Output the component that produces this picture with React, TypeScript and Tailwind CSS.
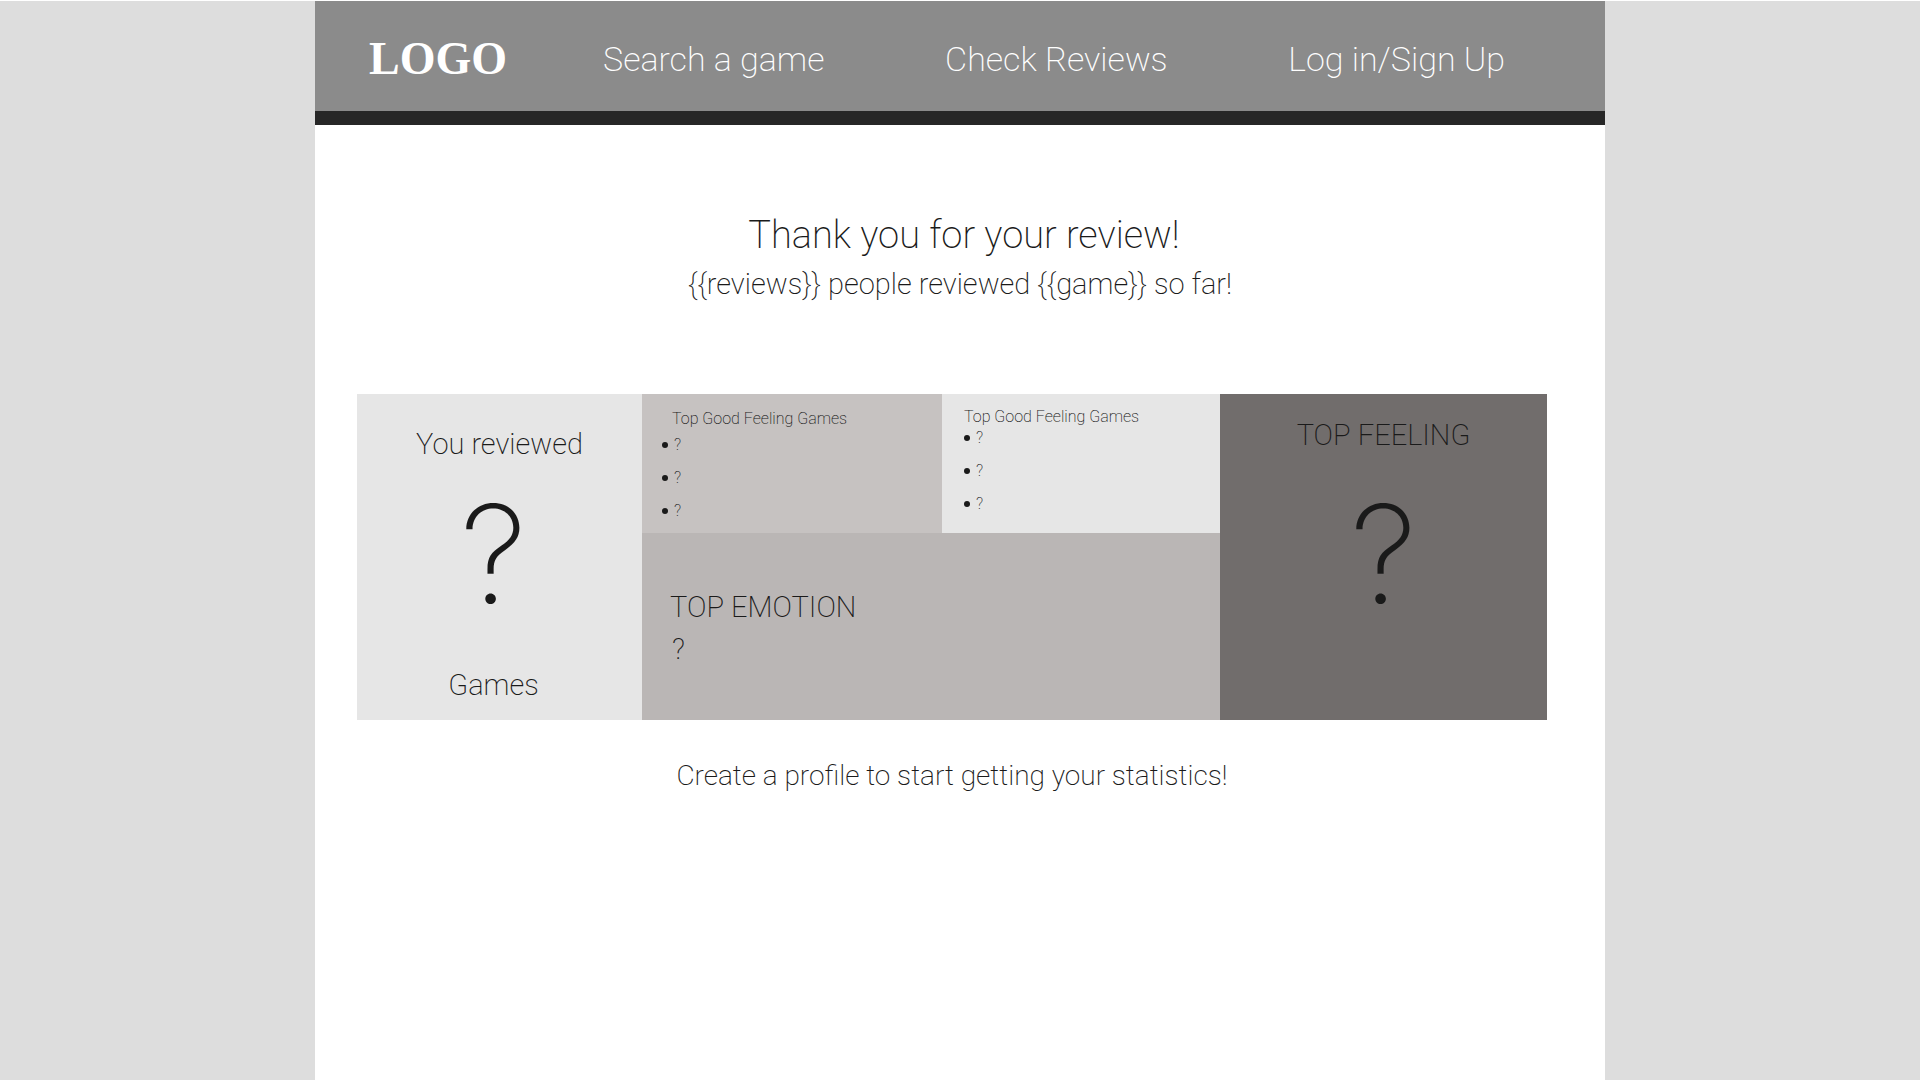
const navLinks = ["Search a game", "Check Reviews", "Log in/Sign Up"];

function FeelingList() {
  return (
    <ul className="flex flex-col gap-[13px]">
      {[0, 1, 2].map((i) => (
        <li key={i} className="flex items-center gap-1.5 text-base leading-5">
          <span className="h-1.5 w-1.5 rounded-full bg-[#1a1a1a]" aria-hidden="true" />
          ?
        </li>
      ))}
    </ul>
  );
}

function Header() {
  return (
    <header className="flex items-center border-b-[14px] border-[#272727] bg-[#8b8b8b] pt-9 pb-[30px] pl-[54px] pr-[100px] text-white">
      <a href="#" className="font-['Liberation_Serif',serif] text-[46px] leading-[44px] font-bold">
        LOGO
      </a>
      <nav className="ml-24 flex flex-1 justify-between text-[34px] leading-[38px]">
        {navLinks.map((label) => (
          <a key={label} href="#">
            {label}
          </a>
        ))}
      </nav>
    </header>
  );
}

export default function App() {
  return (
    <div className="min-h-screen border-t border-white bg-[#dddddd] font-['Roboto',sans-serif] font-extralight text-[#1a1a1a]">
      <div className="mx-auto flex min-h-[calc(100vh-1px)] w-full max-w-[1290px] flex-col bg-white">
        <Header />
        <main className="pt-[86px]">
          <section className="text-center">
            <h1 className="pl-2 text-[38px] leading-[48px]">Thank you for your review!</h1>
            <p className="mt-[5px] text-[29px] leading-10">
              {"{{reviews}} people reviewed {{game}} so far!"}
            </p>
          </section>

          <section className="mt-[90px] pr-[58px] pl-[42px] text-[29px] leading-10">
            <div className="grid grid-cols-[285fr_300fr_278fr_327fr]">
              <article className="row-span-2 bg-[#e6e6e6] pt-[30px] pb-[15px] text-center">
                <h2>You reviewed</h2>
                <p className="mt-5 pr-3 font-['Inter',sans-serif] text-[136px] leading-[140px]">?</p>
                <p className="mt-[41px] pr-3">Games</p>
              </article>
              <article className="bg-[#c6c2c1] pt-[17px] pb-3 pl-5">
                <h2 className="mb-2 pl-[10px] text-base leading-4">Top Good Feeling Games</h2>
                <FeelingList />
              </article>
              <article className="bg-[#e6e6e6] pt-[15px] pb-[19px] pl-[22px]">
                <h2 className="mb-[3px] text-base leading-4">Top Good Feeling Games</h2>
                <FeelingList />
              </article>
              <article className="row-span-2 bg-[#716d6c] pt-[21px] text-center">
                <h2>TOP FEELING</h2>
                <p className="mt-[29px] font-['Inter',sans-serif] text-[136px] leading-[140px]">?</p>
              </article>
              <article className="col-span-2 bg-[#bab6b5] pt-[54px] pb-[51px] pl-7">
                <h2>TOP EMOTION</h2>
                <p className="mt-0.5 pl-0.5">?</p>
              </article>
            </div>
            <p className="mt-9 text-center text-[28px]">Create a profile to start getting your statistics!</p>
          </section>
        </main>
      </div>
    </div>
  );
}
